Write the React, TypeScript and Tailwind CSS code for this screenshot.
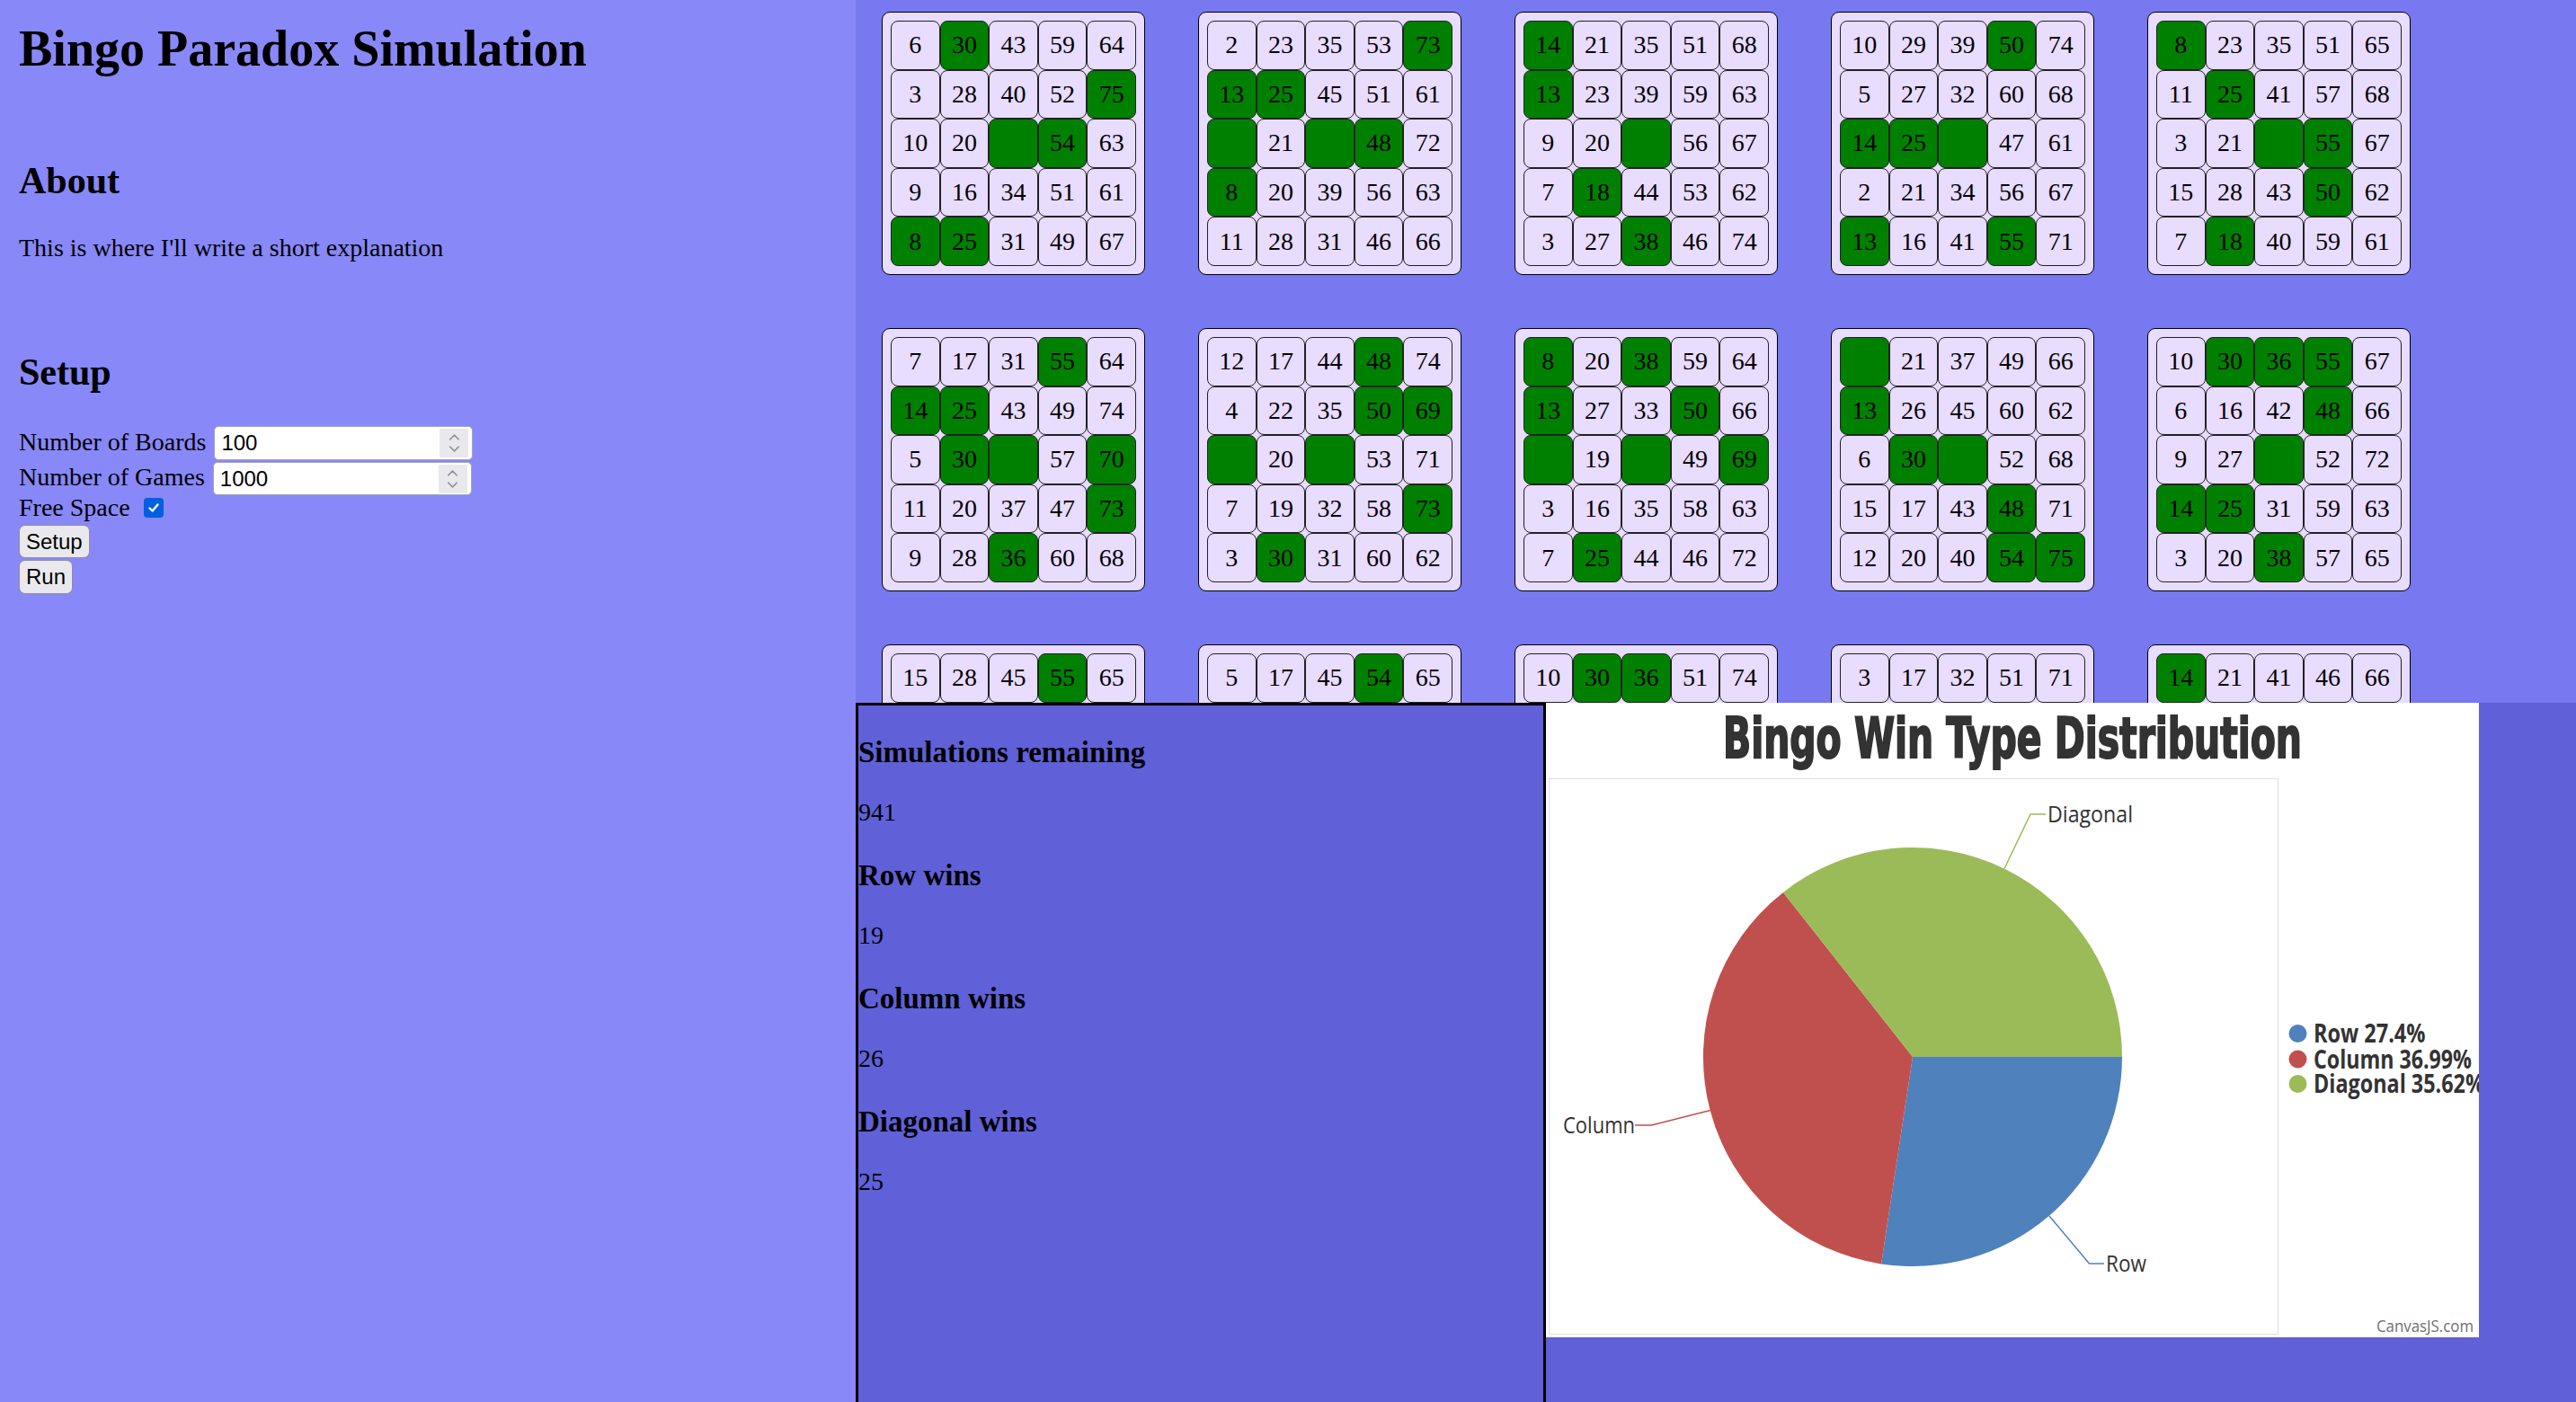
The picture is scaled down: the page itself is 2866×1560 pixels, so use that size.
import React from 'react';
import { ChevronUp, ChevronDown } from 'lucide-react';

// "*" alone = green blank, "*30" = green 30
const boards: string[][] = [
    ['6 *30 43 59 64', '3 28 40 52 *75', '10 20 * *54 63', '9 16 34 51 61', '*8 *25 31 49 67'],
    ['2 23 35 53 *73', '*13 *25 45 51 61', '* 21 * *48 72', '*8 20 39 56 63', '11 28 31 46 66'],
    ['*14 21 35 51 68', '*13 23 39 59 63', '9 20 * 56 67', '7 *18 44 53 62', '3 27 *38 46 74'],
    ['10 29 39 *50 74', '5 27 32 60 68', '*14 *25 * 47 61', '2 21 34 56 67', '*13 16 41 *55 71'],
    ['*8 23 35 51 65', '11 *25 41 57 68', '3 21 * *55 67', '15 28 43 *50 62', '7 *18 40 59 61'],
    ['7 17 31 *55 64', '*14 *25 43 49 74', '5 *30 * 57 *70', '11 20 37 47 *73', '9 28 *36 60 68'],
    ['12 17 44 *48 74', '4 22 35 *50 *69', '* 20 * 53 71', '7 19 32 58 *73', '3 *30 31 60 62'],
    ['*8 20 *38 59 64', '*13 27 33 *50 66', '* 19 * 49 *69', '3 16 35 58 63', '7 *25 44 46 72'],
    ['* 21 37 49 66', '*13 26 45 60 62', '6 *30 * 52 68', '15 17 43 *48 71', '12 20 40 *54 *75'],
    ['10 *30 *36 *55 67', '6 16 42 *48 66', '9 27 * 52 72', '*14 *25 31 59 63', '3 20 *38 57 65'],
    ['15 28 45 *55 65', '*14 20 33 48 61', '2 *18 * 52 70', '9 23 37 56 63', '4 26 42 47 *73'],
    ['5 17 45 *54 65', '*13 *25 41 50 66', '8 19 * 57 72', '11 22 34 59 68', '1 29 44 46 74'],
    ['10 *30 *36 51 74', '6 18 42 49 62', '3 27 * 58 70', '12 21 39 *55 67', '7 16 43 47 61'],
    ['3 17 32 51 71', '*8 24 40 53 66', '14 28 * 60 63', '9 19 35 46 75', '2 22 45 57 69'],
    ['*14 21 41 46 66', '5 29 33 *48 68', '11 16 * 56 73', '1 26 38 52 61', '7 23 44 59 70'],
];

const BingoBoard: React.FC<{ rows: string[] }> = ({ rows }) => (
    <div className="w-[293px] h-[293px] bg-[#e8dcff] border border-black rounded-[9px] p-[9px]">
        <div className="grid grid-cols-5 grid-rows-5 h-full">
            {rows.flatMap((row, r) =>
                row.split(' ').map((tok, c) => {
                    const hit = tok.startsWith('*');
                    const num = tok.replace('*', '');
                    return (
                        <div
                            key={`${r}-${c}`}
                            className={`flex items-center justify-center rounded-[8px] border-[1.5px] border-[#222] text-[28px] leading-none ${
                                hit ? 'bg-[#008000]' : 'bg-[#e8dcff]'
                            }`}
                        >
                            {num}
                        </div>
                    );
                })
            )}
        </div>
    </div>
);

const NumberInput: React.FC<{ value: string }> = ({ value }) => (
    <div className="ml-[9px] w-[288px] h-full flex items-center bg-white border-[1.5px] border-[#a4a4b0] rounded-[5px] pl-[7px] pr-[4px]">
        <span className="flex-1 font-['Liberation_Sans',Arial,sans-serif] text-[24px] leading-none">{value}</span>
        <div className="w-[32px] h-[32px] bg-[#e9e9ed] flex flex-col items-center justify-center text-[#8f8f9d]">
            <ChevronUp size={19} strokeWidth={1.8} className="-mb-[3px]" />
            <ChevronDown size={19} strokeWidth={1.8} className="-mt-[3px]" />
        </div>
    </div>
);

const PieChart: React.FC = () => (
    <svg width="1038" height="706" viewBox="0 0 1038 706" className="block overflow-hidden">
        <rect x="0" y="0" width="1038" height="706" fill="#ffffff" />
        <rect x="3.5" y="84.5" width="811" height="618" fill="none" stroke="#dcdcf2" strokeWidth="1" />
        <text
            x="519"
            y="61"
            textAnchor="middle"
            textLength="644"
            lengthAdjust="spacingAndGlyphs"
            fontFamily="'Liberation Sans Narrow', 'DejaVu Sans Condensed', 'Liberation Sans', sans-serif"
            fontWeight="bold"
            fontSize="62"
            fill="#333333"
            stroke="#333333"
            strokeWidth="2"
        >
            Bingo Win Type Distribution
        </text>

        <path d="M408,394 L641,394 A233,233 0 0 1 373,624.4 Z" fill="#4f81bc" />
        <path d="M408,394 L373,624.4 A233,233 0 0 1 263.9,210.9 Z" fill="#c0504e" />
        <path d="M408,394 L263.9,210.9 A233,233 0 0 1 641,394 Z" fill="#9bbb58" />

        <polyline points="510,184.5 539,124 556,124" fill="none" stroke="#9bbb58" strokeWidth="1.5" />
        <polyline points="182.7,453.5 117.5,470 99,470" fill="none" stroke="#c0504e" strokeWidth="1.5" />
        <polyline points="560,571 604.5,624 621,624" fill="none" stroke="#4f81bc" strokeWidth="1.5" />

        <g fontFamily="'Open Sans', 'DejaVu Sans', sans-serif" fontSize="26" fill="#333333">
            <text x="558" y="133" textLength="95" lengthAdjust="spacingAndGlyphs">Diagonal</text>
            <text x="19" y="479" textLength="80" lengthAdjust="spacingAndGlyphs">Column</text>
            <text x="623" y="633" textLength="45" lengthAdjust="spacingAndGlyphs">Row</text>
        </g>

        <circle cx="836.5" cy="368" r="10" fill="#4f81bc" />
        <circle cx="836.5" cy="396.5" r="10" fill="#c0504e" />
        <circle cx="836.5" cy="424" r="10" fill="#9bbb58" />
        <g fontFamily="'Open Sans', 'DejaVu Sans', sans-serif" fontSize="28" fontWeight="700" fill="#333333">
            <text x="854" y="378" textLength="124.5" lengthAdjust="spacingAndGlyphs">Row 27.4%</text>
            <text x="854" y="406.5" textLength="176" lengthAdjust="spacingAndGlyphs">Column 36.99%</text>
            <text x="854" y="434" textLength="190" lengthAdjust="spacingAndGlyphs">Diagonal 35.62%</text>
        </g>

        <text
            x="924"
            y="700"
            textLength="108"
            lengthAdjust="spacingAndGlyphs"
            fontFamily="'Open Sans', 'DejaVu Sans', sans-serif"
            fontSize="18"
            fill="#707070"
        >
            CanvasJS.com
        </text>
    </svg>
);

const stats = [
    { label: 'Simulations remaining', value: '941' },
    { label: 'Row wins', value: '19' },
    { label: 'Column wins', value: '26' },
    { label: 'Diagonal wins', value: '25' },
];

const App: React.FC = () => {
    return (
        <div className="flex h-screen overflow-hidden font-['Liberation_Serif','Times_New_Roman',serif] text-black">
            <aside className="w-[952px] shrink-0 bg-[#8888f8] pl-[21px] pt-[22px]">
                <h1 className="text-[56px] leading-[64px] font-bold">Bingo Paradox Simulation</h1>
                <h2 className="mt-[91px] text-[42px] leading-[48px] font-bold">About</h2>
                <p className="mt-[35px] text-[28px] leading-[32px]">This is where I'll write a short explanation</p>
                <h2 className="mt-[98px] text-[42px] leading-[48px] font-bold">Setup</h2>

                <div className="mt-[36px] h-[38px] flex items-center text-[28px] leading-[32px]">
                    <span className="-mt-[3px]">Number of Boards</span>
                    <NumberInput value="100" />
                </div>
                <div className="mt-[2px] h-[37px] flex items-center text-[28px] leading-[32px]">
                    <span className="-mt-[3px]">Number of Games</span>
                    <NumberInput value="1000" />
                </div>
                <div className="-mt-[2px] flex items-center text-[28px] leading-[32px]">
                    <span>Free Space</span>
                    <span className="ml-[15px] w-[22px] h-[22px] rounded-[4px] bg-[#0060df] flex items-center justify-center">
                        <svg width="14" height="14" viewBox="0 0 14 14">
                            <path d="M2.5 7.5 L5.6 10.5 L11.5 3.5" fill="none" stroke="#ffffff" strokeWidth="2.4" strokeLinecap="round" strokeLinejoin="round" />
                        </svg>
                    </span>
                </div>
                <button className="mt-[3px] block h-[37px] px-[7px] bg-[#e9e9ed] border-[1.5px] border-[#8f8f9d] rounded-[7px] font-['Liberation_Sans',Arial,sans-serif] text-[24px] leading-none">
                    Setup
                </button>
                <button className="mt-[2px] block h-[38px] px-[7px] bg-[#e9e9ed] border-[1.5px] border-[#8f8f9d] rounded-[7px] font-['Liberation_Sans',Arial,sans-serif] text-[24px] leading-none">
                    Run
                </button>
            </aside>

            <main className="flex-1 min-w-0 flex flex-col">
                <div className="h-[782px] shrink-0 overflow-hidden bg-[#7878f0] pl-[29px] pt-[13px]">
                    <div className="grid grid-cols-[repeat(5,293px)] gap-[59px]">
                        {boards.map((b, i) => (
                            <BingoBoard key={i} rows={b} />
                        ))}
                    </div>
                </div>

                <div className="flex-1 min-h-0 flex items-start bg-[#6060d8]">
                    <section className="w-[768px] h-full shrink-0 border-[3px] border-b-0 border-black">
                        {stats.map((s, i) => (
                            <div key={s.label}>
                                <h3 className={`${i === 0 ? 'mt-[33px]' : 'mt-[35px]'} text-[33px] leading-[38px] font-bold`}>{s.label}</h3>
                                <p className="mt-[32px] text-[28px] leading-[32px]">{s.value}</p>
                            </div>
                        ))}
                    </section>
                    <div className="w-[1038px] h-[706px] shrink-0 bg-white">
                        <PieChart />
                    </div>
                </div>
            </main>
        </div>
    );
};

export default App;
